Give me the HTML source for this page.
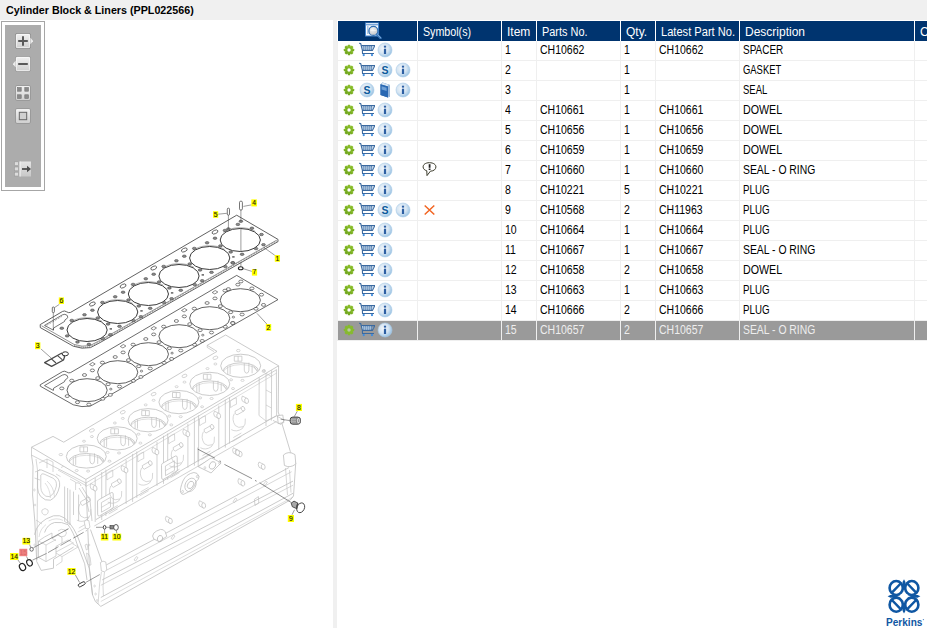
<!DOCTYPE html>
<html><head><meta charset="utf-8"><title>Cylinder Block &amp; Liners</title>
<style>
*{box-sizing:border-box}
html,body{margin:0;padding:0}
body{width:927px;height:628px;overflow:hidden;background:#fff;font-family:"Liberation Sans",sans-serif;position:relative}
#title{position:absolute;left:0;top:0;width:927px;height:20px;background:#f0f0f0;font-weight:bold;font-size:11px;line-height:20px;padding-left:6px;color:#000;white-space:nowrap}
#sep{position:absolute;left:333px;top:20px;width:4px;height:608px;background:#f0f0f0}
#tools{position:absolute;left:1px;top:21px;width:44px;height:170px;border:1px solid #a6a6a6;background:#fff}
#tools .in{position:absolute;left:3px;top:3px;width:36px;height:162px;background:#acacac}
#tools svg{position:absolute;overflow:visible}
#diagram{position:absolute;left:0;top:20px;width:333px;height:608px}
#grid{position:absolute;left:337px;top:20px;width:590px;height:608px;overflow:hidden}
table{border-collapse:separate;border-spacing:0;table-layout:fixed;position:absolute;left:0;top:0;width:700px;font-size:12px;color:#000}
th{background:#00346f;color:#fff;font-weight:normal;text-align:left;height:21px;padding:0 0 0 5px;border-left:1px solid #fff;border-top:1px solid #fff;white-space:nowrap;overflow:hidden;line-height:20px}
td{height:20px;padding:0 0 0 3px;border-left:1px solid #efefef;border-bottom:1px solid #efefef;white-space:nowrap;overflow:hidden;line-height:19px;position:relative}
tr.sel td{background:#9a9a9a;color:#eee;border-left-color:#efefef}
td.c1,td.c2{padding:0}
span.t{display:inline-block;transform-origin:0 50%;transform:scaleX(.875);font-size:12px}
th span{display:inline-block;transform-origin:0 50%;position:relative;top:1px}
#title span{display:inline-block;transform-origin:0 50%;transform:scaleX(.975)}
svg.ic{position:absolute;top:1px;width:16px;height:16px;overflow:visible}
svg.sy{position:absolute;left:4px;top:1px;width:16px;height:16px;overflow:visible}
#logo{position:absolute;left:884px;top:576px;width:43px;height:52px;overflow:visible}
</style></head><body>
<svg width="0" height="0" style="position:absolute">
<defs>
<radialGradient id="gInfo" cx="0.4" cy="0.4" r="0.65">
 <stop offset="0" stop-color="#f4f8fc"/><stop offset="0.55" stop-color="#d4e4f2"/><stop offset="1" stop-color="#94bfe2"/>
</radialGradient>
<linearGradient id="gBtn" x1="0" y1="0" x2="0" y2="1"><stop offset="0" stop-color="#f2f2f2"/><stop offset="1" stop-color="#cfcfcf"/></linearGradient>
<linearGradient id="gGear" x1="0" y1="0" x2="0" y2="1"><stop offset="0" stop-color="#8cc02c"/><stop offset="1" stop-color="#6fa51c"/></linearGradient>
<radialGradient id="gLens" cx="0.4" cy="0.35" r="0.7"><stop offset="0" stop-color="#f2f2f2"/><stop offset="1" stop-color="#bfc3c8"/></radialGradient>
</defs>
<symbol id="gear" viewBox="0 0 16 16">
 <g transform="translate(8,8)" fill="url(#gGear)">
  <circle r="4"/>
  <g id="gt"><rect x="-1.25" y="-5.2" width="2.5" height="10.4" rx="0.5"/><rect x="-5.2" y="-1.25" width="10.4" height="2.5" rx="0.5"/></g>
  <use href="#gt" transform="rotate(45)"/>
  <circle r="1.7" fill="#fff"/>
 </g>
</symbol>
<symbol id="gear2" viewBox="0 0 16 16">
 <g transform="translate(8,8)" fill="#86ba2e">
  <circle r="4"/>
  <g id="gt2"><rect x="-1.25" y="-5.2" width="2.5" height="10.4" rx="0.5"/><rect x="-5.2" y="-1.25" width="10.4" height="2.5" rx="0.5"/></g>
  <use href="#gt2" transform="rotate(45)"/>
  <circle r="1.7" fill="#b9c9a0"/>
 </g>
</symbol>
<symbol id="cart" viewBox="0 0 16 16">
 <path d="M2.4 3.6 L13.2 3.6 L11.3 8.4 L3.6 8.4 Z" fill="#dfe9f4" stroke="none"/>
 <path d="M0 1.3 L1.7 1.5 L3.4 8.4 L3.5 11.5 L15 11.5" fill="none" stroke="#3b6aa0" stroke-width="1.1" stroke-linejoin="round"/>
 <path d="M2.3 3.6 L15.9 3.6 L13.4 8.4 L3.4 8.4" fill="none" stroke="#3b6aa0" stroke-width="1.1"/>
 <path d="M4.8 4 V8 M6.8 4 V8 M8.8 4 V8 M10.8 4 V8 M12.6 4 V8" stroke="#4a78ad" stroke-width="0.9"/>
 <path d="M3 6 H14.5" stroke="#7fa3cb" stroke-width="0.7"/>
 <circle cx="4.7" cy="13.1" r="1.15" fill="#3b8be0"/><circle cx="13" cy="13.1" r="1.15" fill="#3b8be0"/>
</symbol>
<symbol id="info" viewBox="0 0 16 16">
 <circle cx="8" cy="8" r="7" fill="url(#gInfo)" stroke="#a9cbe8" stroke-width="0.6"/>
 <rect x="6.9" y="3.7" width="2.2" height="1.9" fill="#2d5fa3"/><rect x="6.9" y="6.7" width="2.2" height="5.3" fill="#2d5fa3"/>
</symbol>
<symbol id="sicon" viewBox="0 0 16 16">
 <circle cx="8" cy="8" r="7" fill="url(#gInfo)" stroke="#a9cbe8" stroke-width="0.6"/>
 <text x="8" y="11.6" text-anchor="middle" font-family="Liberation Sans, sans-serif" font-weight="bold" font-size="10.5" fill="#0c5a9a">S</text>
</symbol>
<symbol id="book" viewBox="0 0 16 16">
 <path d="M3.5 2.2 L5.5 0.6 L13 3 L13 14 L11 15.6 L3.5 13 Z" fill="#2f6fb8"/>
 <path d="M5.5 0.6 L13 3 L13 14 L11 15.6 L11 4.4 L3.5 2.2Z" fill="#d9e6f3"/>
 <path d="M3.5 2.2 L11 4.6 L11 15.6 L3.5 13 Z" fill="#2a68b2"/>
 <path d="M4.6 4.2 L9.6 5.8 L9.6 9 L4.6 7.4Z" fill="#6fa0d6"/>
 <path d="M12 3.2 L12 14.6" stroke="#2a68b2" stroke-width="0.8"/>
</symbol>
<symbol id="search" viewBox="0 0 17 17">
 <rect x="0.5" y="1" width="13" height="13" fill="#fff" stroke="#4484cc" stroke-width="1"/>
 <rect x="1" y="1.5" width="12" height="0.8" fill="#fff"/><rect x="1" y="2.3" width="12" height="1" fill="#3f7fc8"/>
 <path d="M2 5 h1.6 M2 7 h1.6 M2 9 h1.6 M2 11 h1.6" stroke="#4d86c6" stroke-width="0.9"/>
 <circle cx="8.4" cy="8.9" r="4.5" fill="url(#gLens)" stroke="#2f6fb3" stroke-width="1.2"/>
 <path d="M5.4 8.6 h6" stroke="#fff" stroke-width="0.8" opacity="0.7"/>
 <path d="M11.9 12.4 L15.6 16.1" stroke="#3b78ba" stroke-width="2.2" stroke-linecap="round"/>
 <path d="M12.6 12.6 L15.6 15.6" stroke="#9cc0e6" stroke-width="0.7" stroke-linecap="round"/>
</symbol>
<symbol id="note" viewBox="0 0 16 16">
 <path d="M7.4 0.7 C3.4 0.7 1.1 2.6 1.1 4.9 C1.1 6.8 2.6 8.2 4.8 8.8 L5 13.6 L8.4 9.2 C12 9.1 13.9 7.1 13.9 4.9 C13.9 2.6 11.6 0.7 7.4 0.7Z" fill="#fff" stroke="#3a3a2a" stroke-width="1" stroke-linejoin="round"/>
 <rect x="6.7" y="2.2" width="1.8" height="3.6" fill="#222"/><rect x="6.7" y="6.5" width="1.8" height="1.5" fill="#222"/>
</symbol>
<symbol id="xmark" viewBox="0 0 16 16">
 <path d="M2.7 3.5 L12.3 12.5 M12.3 3.5 L2.7 12.5" stroke="#f26522" stroke-width="1.5" stroke-linecap="butt"/>
</symbol>
<symbol id="tplus" viewBox="0 0 18 16">
 <rect x="0.5" y="0.5" width="15" height="15" rx="1.5" fill="url(#gBtn)" stroke="#8d8d8d" stroke-width="1"/>
 <path d="M15.4 4.8 L18.2 8 L15.4 11.2Z" fill="#ececec"/>
 <rect x="1.3" y="1.3" width="13.4" height="13.4" rx="1" fill="none" stroke="#fff" stroke-width="0.8" opacity="0.8"/>
 <path d="M3.2 8 H12.8 M8 3.2 V12.8" stroke="#5a5a5a" stroke-width="2"/>
</symbol>
<symbol id="tminus" viewBox="0 0 18 16">
 <rect x="2.5" y="0.5" width="15" height="15" rx="1.5" fill="url(#gBtn)" stroke="#9a9a9a" stroke-width="1"/>
 <path d="M2.6 4.8 L-0.2 8 L2.6 11.2Z" fill="#ececec"/>
 <rect x="3.3" y="1.3" width="13.4" height="13.4" rx="1" fill="none" stroke="#fff" stroke-width="0.8" opacity="0.8"/>
 <path d="M5.2 8 H14.8" stroke="#5a5a5a" stroke-width="2"/>
</symbol>
<symbol id="tgrid" viewBox="0 0 16 16">
 <rect x="0.5" y="0.5" width="15" height="15" rx="1.5" fill="url(#gBtn)" stroke="#9a9a9a" stroke-width="1"/>
 <g fill="#8a8a8a" stroke="#6f6f6f" stroke-width="0.6"><rect x="2.6" y="2.6" width="3.6" height="3.6"/><rect x="9.8" y="2.6" width="3.6" height="3.6"/><rect x="2.6" y="9.8" width="3.6" height="3.6"/><rect x="9.8" y="9.8" width="3.6" height="3.6"/></g>
</symbol>
<symbol id="tsq" viewBox="0 0 16 16">
 <rect x="0.5" y="0.5" width="15" height="15" rx="1.5" fill="url(#gBtn)" stroke="#9a9a9a" stroke-width="1"/>
 <rect x="4.3" y="4.3" width="7.4" height="7.4" fill="#d0d0d0" stroke="#666" stroke-width="1"/>
</symbol>
<symbol id="tlist" viewBox="0 0 18 16">
 <rect x="6" y="0.5" width="11" height="15" fill="url(#gBtn)" opacity="0.8"/>
 <path d="M6 0.5 V15.5" stroke="#f2f2f2" stroke-width="1.2"/>
 <g fill="#dcdcdc" stroke="#9a9a9a" stroke-width="0.6"><rect x="0.5" y="0.8" width="4" height="3.8"/><rect x="0.5" y="6" width="4" height="3.8"/><rect x="0.5" y="11.2" width="4" height="3.8"/></g>
 <path d="M8 8 H14" stroke="#4d4d4d" stroke-width="1.8"/><path d="M13 4.8 L17 8 L13 11.2Z" fill="#4d4d4d"/>
</symbol>
<symbol id="perkins" viewBox="0 0 43 52">
 <g fill="none" stroke="#0f57a3" stroke-width="2.6">
  <ellipse cx="12.2" cy="12" rx="6.6" ry="7"/><ellipse cx="27.8" cy="12" rx="6.6" ry="7"/>
  <ellipse cx="12.2" cy="28.7" rx="6.6" ry="7"/><ellipse cx="27.8" cy="28.7" rx="6.6" ry="7"/>
  <path d="M7.4 17.2 L17.2 7 M32.6 17.2 L22.8 7 M7.4 23.5 L17.2 33.7 M32.6 23.5 L22.8 33.7" stroke-width="2.5"/>
 </g>
 <path d="M3.6 20.35 L6.4 18.9 H33.6 L36.4 20.35 L33.6 21.8 H6.4Z M20 3.2 L21.5 6 V34.7 L20 37.5 L18.5 34.7 V6Z" fill="#0f57a3"/>
 <path d="M13.2 20.35 Q18.8 19.2 20 13.4 Q21.2 19.2 26.8 20.35 Q21.2 21.5 20 27.3 Q18.8 21.5 13.2 20.35Z" fill="#fff"/>
 <text x="2" y="49.6" font-family="Liberation Sans, sans-serif" font-weight="bold" font-size="11" fill="#0f57a3" textLength="36.4" lengthAdjust="spacingAndGlyphs">Perkins</text>
 <circle cx="39.4" cy="43.6" r="0.7" fill="#5c8cc4"/>
</symbol>
</svg>

<div id="title"><span>Cylinder Block &amp; Liners (PPL022566)</span></div>
<div id="diagram"><svg width="333" height="608" viewBox="0 20 333 608" style="display:block">
<g id="block">
<path d="M278.6 365.8 L278.2 412 L281.8 423 L290.4 451.7 L295.7 463.5 L293.5 496 L290.3 500 L100.8 606.4 L95.4 601.6 L92.6 595 L89.4 568 L85.9 483" fill="none" stroke="#bebebe" stroke-width="0.8" stroke-linejoin="round" />
<path d="M95.9 519.6 L276 415.9" fill="none" stroke="#bebebe" stroke-width="0.8" stroke-linejoin="round" />
<path d="M94.3 526 L197.9 466.3 L276.6 421.4" fill="none" stroke="#bebebe" stroke-width="0.7" stroke-linejoin="round" />
<path d="M197.9 460.7 V447.4" fill="none" stroke="#bebebe" stroke-width="0.7" stroke-linejoin="round" />
<path d="M106.2 565 L288.9 467.6" fill="none" stroke="#bebebe" stroke-width="0.8" stroke-linejoin="round" />
<path d="M106.2 570.4 L291.6 471.7" fill="none" stroke="#bebebe" stroke-width="0.6" stroke-linejoin="round" />
<path d="M102.2 579.9 L293 481.1" fill="none" stroke="#bebebe" stroke-width="0.8" stroke-linejoin="round" />
<path d="M100.8 585.3 L293 485.2" fill="none" stroke="#bebebe" stroke-width="0.6" stroke-linejoin="round" />
<path d="M100.8 597.5 L293 493.3" fill="none" stroke="#bebebe" stroke-width="0.8" stroke-linejoin="round" />
<path d="M100.8 601.5 L293 497" fill="none" stroke="#bebebe" stroke-width="0.5" stroke-linejoin="round" />
<path d="M283.4 455 Q288.6 450.4 295 454.6 L295.8 464 Q290 468.6 284.4 465.4Z" fill="#fff" stroke="#bebebe" stroke-width="0.8" stroke-linejoin="round" />
<path d="M277.4 415.6 l5.4 -0.6 l1 7.6 l-5.6 1Z" fill="#fff" stroke="#bebebe" stroke-width="0.8" stroke-linejoin="round" />
<path d="M289.5 470 L291 492.6 M285.5 468 L287.5 495" fill="none" stroke="#bebebe" stroke-width="0.6" stroke-linejoin="round" />
<path d="M271.6 370.2 L271.4 420.6 M266 373.4 L266 426 M259.2 377.4 L259 415.5 M276.4 369.6 L276.6 416" fill="none" stroke="#bebebe" stroke-width="0.7" stroke-linejoin="round" />
<path d="M259 415.5 L266 421 L276.6 416 M266 373.4 L271.6 376.6 M266 390 L271.5 393 M266 405 L271.5 408" fill="none" stroke="#bebebe" stroke-width="0.6" stroke-linejoin="round" />
<path d="M276.6 416 L284.4 420.2 L281 424.5 L273 420.4" fill="none" stroke="#bebebe" stroke-width="0.7" stroke-linejoin="round" />
<path d="M225.3 399.6 V447.6 M229.5 397.2 V443.6 M218.8 405.6 V449.6" fill="none" stroke="#bebebe" stroke-width="0.7" stroke-linejoin="round" />
<path d="M230.3 401.1 q3 -2.4 6 -3.4 l0.2 6.5 q-3 1 -6 3.4Z" fill="none" stroke="#bebebe" stroke-width="0.6" stroke-linejoin="round" />
<path d="M194.4 417.7 V465.7 M198.6 415.3 V461.7 M187.9 423.7 V467.7" fill="none" stroke="#bebebe" stroke-width="0.7" stroke-linejoin="round" />
<path d="M199.4 419.2 q3 -2.4 6 -3.4 l0.2 6.5 q-3 1 -6 3.4Z" fill="none" stroke="#bebebe" stroke-width="0.6" stroke-linejoin="round" />
<path d="M163.5 435.8 V483.8 M167.7 433.4 V479.8 M157.0 441.8 V485.8" fill="none" stroke="#bebebe" stroke-width="0.7" stroke-linejoin="round" />
<path d="M168.5 437.3 q3 -2.4 6 -3.4 l0.2 6.5 q-3 1 -6 3.4Z" fill="none" stroke="#bebebe" stroke-width="0.6" stroke-linejoin="round" />
<path d="M132.6 453.9 V501.9 M136.8 451.5 V497.9 M126.1 459.9 V503.9" fill="none" stroke="#bebebe" stroke-width="0.7" stroke-linejoin="round" />
<path d="M137.6 455.4 q3 -2.4 6 -3.4 l0.2 6.5 q-3 1 -6 3.4Z" fill="none" stroke="#bebebe" stroke-width="0.6" stroke-linejoin="round" />
<path d="M101.7 472.0 V520.0 M105.9 469.6 V516.0 M95.2 478.0 V522.0" fill="none" stroke="#bebebe" stroke-width="0.7" stroke-linejoin="round" />
<path d="M106.7 473.5 q3 -2.4 6 -3.4 l0.2 6.5 q-3 1 -6 3.4Z" fill="none" stroke="#bebebe" stroke-width="0.6" stroke-linejoin="round" />
<path d="M162.4 463.4 l13 -7.4 q1.6 -0.4 1.8 1.2 l0.2 12.8 q0 1.3 -1.3 2.1 l-12.6 7.2 q-1.6 0.5 -1.8 -1.2 l-0.2 -12.6 q0 -1.4 0.9 -2.1Z" fill="#fff" stroke="#bebebe" stroke-width="0.8" stroke-linejoin="round" />
<path d="M165.4 466.0 l9 -5.2 l0.1 9.6 l-9 5.2Z" fill="none" stroke="#bebebe" stroke-width="0.7" stroke-linejoin="round" />
<path d="M165.4 470.8 l9 -5.2" fill="none" stroke="#bebebe" stroke-width="0.6" stroke-linejoin="round" />
<path d="M98.4 500.0 l13 -7.4 q1.6 -0.4 1.8 1.2 l0.2 12.8 q0 1.3 -1.3 2.1 l-12.6 7.2 q-1.6 0.5 -1.8 -1.2 l-0.2 -12.6 q0 -1.4 0.9 -2.1Z" fill="#fff" stroke="#bebebe" stroke-width="0.8" stroke-linejoin="round" />
<path d="M101.4 502.6 l9 -5.2 l0.1 9.6 l-9 5.2Z" fill="none" stroke="#bebebe" stroke-width="0.7" stroke-linejoin="round" />
<path d="M101.4 507.4 l9 -5.2" fill="none" stroke="#bebebe" stroke-width="0.6" stroke-linejoin="round" />
<path d="M244.0 410.9 l-7 4 q-2.4 -0.6 -2 -3.6 l7 -4" fill="none" stroke="#bebebe" stroke-width="0.7" stroke-linejoin="round" />
<ellipse cx="243.0" cy="408.7" rx="1.7" ry="2.4" fill="#fff" stroke="#bebebe" stroke-width="0.7" transform="rotate(-25 243.0 408.7)"/>
<path d="M231.3 429.6 q5 3 11 -1 q4 -4 3 -10" fill="none" stroke="#bebebe" stroke-width="0.6" stroke-linejoin="round" />
<path d="M234.3 413.6 q-3 6 1 12 q3 3 8 1" fill="none" stroke="#bebebe" stroke-width="0.6" stroke-linejoin="round" />
<path d="M233.3 437.6 l8 -4.6 M232.3 441.6 l9 -5.2" fill="none" stroke="#bebebe" stroke-width="0.6" stroke-linejoin="round" />
<path d="M213.1 429.0 l-7 4 q-2.4 -0.6 -2 -3.6 l7 -4" fill="none" stroke="#bebebe" stroke-width="0.7" stroke-linejoin="round" />
<ellipse cx="212.1" cy="426.8" rx="1.7" ry="2.4" fill="#fff" stroke="#bebebe" stroke-width="0.7" transform="rotate(-25 212.1 426.8)"/>
<path d="M200.4 447.7 q5 3 11 -1 q4 -4 3 -10" fill="none" stroke="#bebebe" stroke-width="0.6" stroke-linejoin="round" />
<path d="M203.4 431.7 q-3 6 1 12 q3 3 8 1" fill="none" stroke="#bebebe" stroke-width="0.6" stroke-linejoin="round" />
<path d="M202.4 455.7 l8 -4.6 M201.4 459.7 l9 -5.2" fill="none" stroke="#bebebe" stroke-width="0.6" stroke-linejoin="round" />
<path d="M182.2 447.1 l-7 4 q-2.4 -0.6 -2 -3.6 l7 -4" fill="none" stroke="#bebebe" stroke-width="0.7" stroke-linejoin="round" />
<ellipse cx="181.2" cy="444.9" rx="1.7" ry="2.4" fill="#fff" stroke="#bebebe" stroke-width="0.7" transform="rotate(-25 181.2 444.9)"/>
<path d="M169.5 465.8 q5 3 11 -1 q4 -4 3 -10" fill="none" stroke="#bebebe" stroke-width="0.6" stroke-linejoin="round" />
<path d="M172.5 449.8 q-3 6 1 12 q3 3 8 1" fill="none" stroke="#bebebe" stroke-width="0.6" stroke-linejoin="round" />
<path d="M171.5 473.8 l8 -4.6 M170.5 477.8 l9 -5.2" fill="none" stroke="#bebebe" stroke-width="0.6" stroke-linejoin="round" />
<path d="M151.3 465.2 l-7 4 q-2.4 -0.6 -2 -3.6 l7 -4" fill="none" stroke="#bebebe" stroke-width="0.7" stroke-linejoin="round" />
<ellipse cx="150.3" cy="463.0" rx="1.7" ry="2.4" fill="#fff" stroke="#bebebe" stroke-width="0.7" transform="rotate(-25 150.3 463.0)"/>
<path d="M138.6 483.9 q5 3 11 -1 q4 -4 3 -10" fill="none" stroke="#bebebe" stroke-width="0.6" stroke-linejoin="round" />
<path d="M141.6 467.9 q-3 6 1 12 q3 3 8 1" fill="none" stroke="#bebebe" stroke-width="0.6" stroke-linejoin="round" />
<path d="M140.6 491.9 l8 -4.6 M139.6 495.9 l9 -5.2" fill="none" stroke="#bebebe" stroke-width="0.6" stroke-linejoin="round" />
<path d="M120.4 483.3 l-7 4 q-2.4 -0.6 -2 -3.6 l7 -4" fill="none" stroke="#bebebe" stroke-width="0.7" stroke-linejoin="round" />
<ellipse cx="119.4" cy="481.1" rx="1.7" ry="2.4" fill="#fff" stroke="#bebebe" stroke-width="0.7" transform="rotate(-25 119.4 481.1)"/>
<path d="M107.7 502.0 q5 3 11 -1 q4 -4 3 -10" fill="none" stroke="#bebebe" stroke-width="0.6" stroke-linejoin="round" />
<path d="M110.7 486.0 q-3 6 1 12 q3 3 8 1" fill="none" stroke="#bebebe" stroke-width="0.6" stroke-linejoin="round" />
<path d="M109.7 510.0 l8 -4.6 M108.7 514.0 l9 -5.2" fill="none" stroke="#bebebe" stroke-width="0.6" stroke-linejoin="round" />
<path d="M89.5 501.4 l-7 4 q-2.4 -0.6 -2 -3.6 l7 -4" fill="none" stroke="#bebebe" stroke-width="0.7" stroke-linejoin="round" />
<ellipse cx="88.5" cy="499.2" rx="1.7" ry="2.4" fill="#fff" stroke="#bebebe" stroke-width="0.7" transform="rotate(-25 88.5 499.2)"/>
<path d="M76.8 520.1 q5 3 11 -1 q4 -4 3 -10" fill="none" stroke="#bebebe" stroke-width="0.6" stroke-linejoin="round" />
<path d="M79.8 504.1 q-3 6 1 12 q3 3 8 1" fill="none" stroke="#bebebe" stroke-width="0.6" stroke-linejoin="round" />
<path d="M78.8 528.1 l8 -4.6 M77.8 532.1 l9 -5.2" fill="none" stroke="#bebebe" stroke-width="0.6" stroke-linejoin="round" />
<path d="M198.2 466.7 L210.1 458.6 Q211.6 457.8 213 458.6 L221.1 462.9 L211.1 473 Z" fill="#fff" stroke="#bebebe" stroke-width="0.8" stroke-linejoin="round" />
<path d="M198.2 466.7 V460.2" fill="none" stroke="#bebebe" stroke-width="0.7" stroke-linejoin="round" />
<ellipse cx="212.5" cy="465.4" rx="2.9" ry="3.9" fill="none" stroke="#bebebe" stroke-width="0.8" transform="rotate(25 212.5 465.4)"/>
<ellipse cx="204.9" cy="467.8" rx="0.9" ry="1.2" fill="none" stroke="#bebebe" stroke-width="0.6"/>
<ellipse cx="219.6" cy="463.2" rx="0.9" ry="1.2" fill="none" stroke="#bebebe" stroke-width="0.6"/>
<path d="M180.5 492 Q179.8 489 182.9 481 Q186 474 193.9 472.5 Q197.4 472.4 199.1 476.3 Q199.4 479 195.8 482 Q194.4 490 183.4 494.4 Q181.4 494.6 180.5 492Z" fill="#fff" stroke="#bebebe" stroke-width="0.8" stroke-linejoin="round" />
<ellipse cx="190.5" cy="484.9" rx="5.2" ry="7.1" fill="none" stroke="#bebebe" stroke-width="0.7" transform="rotate(28 190.5 484.9)"/>
<ellipse cx="190.5" cy="484.9" rx="2.7" ry="3.9" fill="none" stroke="#bebebe" stroke-width="0.8" transform="rotate(28 190.5 484.9)"/>
<ellipse cx="182.6" cy="491.6" rx="0.9" ry="1.2" fill="none" stroke="#bebebe" stroke-width="0.6"/>
<ellipse cx="197.2" cy="476.6" rx="0.9" ry="1.2" fill="none" stroke="#bebebe" stroke-width="0.6"/>
<path d="M152.6 536 q0.4 -3.4 4 -5 l4 -1.6 q3 -0.4 4.6 2.4 l1.6 4.6 l-7.6 5.2 l-5.4 -2.6Z" fill="#fff" stroke="#bebebe" stroke-width="0.8" stroke-linejoin="round" />
<ellipse cx="160.0" cy="538.6" rx="2.6" ry="3.2" fill="none" stroke="#bebebe" stroke-width="0.8" transform="rotate(20 160.0 538.6)"/>
<path d="M240.2 451.4 l-4.2 -2.2 q-1.6 2.4 0 5.2 l4.2 2.2" fill="none" stroke="#bebebe" stroke-width="0.7" stroke-linejoin="round" />
<ellipse cx="240.2" cy="454.0" rx="1.9" ry="2.7" fill="#fff" stroke="#bebebe" stroke-width="0.7" transform="rotate(-10 240.2 454.0)"/>
<path d="M263.2 464.2 l-4.2 -2.2 q-1.6 2.4 0 5.2 l4.2 2.2" fill="none" stroke="#bebebe" stroke-width="0.7" stroke-linejoin="round" />
<ellipse cx="263.2" cy="466.8" rx="1.9" ry="2.7" fill="#fff" stroke="#bebebe" stroke-width="0.7" transform="rotate(-10 263.2 466.8)"/>
<path d="M242.9 480.7 l-4.2 -2.2 q-1.6 2.4 0 5.2 l4.2 2.2" fill="none" stroke="#bebebe" stroke-width="0.7" stroke-linejoin="round" />
<ellipse cx="242.9" cy="483.3" rx="1.9" ry="2.7" fill="#fff" stroke="#bebebe" stroke-width="0.7" transform="rotate(-10 242.9 483.3)"/>
<path d="M203.7 502.9 l-4.2 -2.2 q-1.6 2.4 0 5.2 l4.2 2.2" fill="none" stroke="#bebebe" stroke-width="0.7" stroke-linejoin="round" />
<ellipse cx="203.7" cy="505.5" rx="1.9" ry="2.7" fill="#fff" stroke="#bebebe" stroke-width="0.7" transform="rotate(-10 203.7 505.5)"/>
<path d="M170.4 518.3 l-4.2 -2.2 q-1.6 2.4 0 5.2 l4.2 2.2" fill="none" stroke="#bebebe" stroke-width="0.7" stroke-linejoin="round" />
<ellipse cx="170.4" cy="520.9" rx="1.9" ry="2.7" fill="#fff" stroke="#bebebe" stroke-width="0.7" transform="rotate(-10 170.4 520.9)"/>
<path d="M237.6 450.0 l-4.2 -2.2 q-1.6 2.4 0 5.2 l4.2 2.2" fill="none" stroke="#bebebe" stroke-width="0.7" stroke-linejoin="round" />
<ellipse cx="237.6" cy="452.6" rx="1.9" ry="2.7" fill="#fff" stroke="#bebebe" stroke-width="0.7" transform="rotate(-10 237.6 452.6)"/>
<path d="M246.6 398.2 l-4.2 -2.2 q-1.6 2.4 0 5.2 l4.2 2.2" fill="none" stroke="#bebebe" stroke-width="0.7" stroke-linejoin="round" />
<ellipse cx="246.6" cy="400.8" rx="1.9" ry="2.7" fill="#fff" stroke="#bebebe" stroke-width="0.7" transform="rotate(-10 246.6 400.8)"/>
<path d="M218.7 413.3 l-4.2 -2.2 q-1.6 2.4 0 5.2 l4.2 2.2" fill="none" stroke="#bebebe" stroke-width="0.7" stroke-linejoin="round" />
<ellipse cx="218.7" cy="415.9" rx="1.9" ry="2.7" fill="#fff" stroke="#bebebe" stroke-width="0.7" transform="rotate(-10 218.7 415.9)"/>
<path d="M187.8 431.4 l-4.2 -2.2 q-1.6 2.4 0 5.2 l4.2 2.2" fill="none" stroke="#bebebe" stroke-width="0.7" stroke-linejoin="round" />
<ellipse cx="187.8" cy="434.0" rx="1.9" ry="2.7" fill="#fff" stroke="#bebebe" stroke-width="0.7" transform="rotate(-10 187.8 434.0)"/>
<path d="M156.9 449.5 l-4.2 -2.2 q-1.6 2.4 0 5.2 l4.2 2.2" fill="none" stroke="#bebebe" stroke-width="0.7" stroke-linejoin="round" />
<ellipse cx="156.9" cy="452.1" rx="1.9" ry="2.7" fill="#fff" stroke="#bebebe" stroke-width="0.7" transform="rotate(-10 156.9 452.1)"/>
<path d="M126.0 467.6 l-4.2 -2.2 q-1.6 2.4 0 5.2 l4.2 2.2" fill="none" stroke="#bebebe" stroke-width="0.7" stroke-linejoin="round" />
<ellipse cx="126.0" cy="470.2" rx="1.9" ry="2.7" fill="#fff" stroke="#bebebe" stroke-width="0.7" transform="rotate(-10 126.0 470.2)"/>
<path d="M95.1 485.7 l-4.2 -2.2 q-1.6 2.4 0 5.2 l4.2 2.2" fill="none" stroke="#bebebe" stroke-width="0.7" stroke-linejoin="round" />
<ellipse cx="95.1" cy="488.3" rx="1.9" ry="2.7" fill="#fff" stroke="#bebebe" stroke-width="0.7" transform="rotate(-10 95.1 488.3)"/>
<path d="M134.0 560.0 l2.4 -3.4 l1.6 1 l-2.4 3.4Z" fill="none" stroke="#bebebe" stroke-width="0.6" stroke-linejoin="round" />
<path d="M171.0 538.4 l2.4 -3.4 l1.6 1 l-2.4 3.4Z" fill="none" stroke="#bebebe" stroke-width="0.6" stroke-linejoin="round" />
<path d="M263.4 484.6 l2.4 -3.4 l1.6 1 l-2.4 3.4Z" fill="none" stroke="#bebebe" stroke-width="0.6" stroke-linejoin="round" />
<path d="M233.0 501.6 l2.4 -3.4 l1.6 1 l-2.4 3.4Z" fill="none" stroke="#bebebe" stroke-width="0.6" stroke-linejoin="round" />
<path d="M254.4 499.4 l4 -2.8 l0.4 6.4 l-3.8 2.4Z" fill="none" stroke="#bebebe" stroke-width="0.7" stroke-linejoin="round" />
<path d="M31.5 455.1 L33 466 L32.6 495 L34.8 521 L36.7 561.5 L41.2 570.4 L53.5 568.2 L53.5 559.3 L73.6 547" fill="none" stroke="#bebebe" stroke-width="0.8" stroke-linejoin="round" />
<path d="M36 459 L37.5 470 L37 560" fill="none" stroke="#bebebe" stroke-width="0.6" stroke-linejoin="round" />
<path d="M37.6 471.4 Q38.6 469 41.6 470 L54.4 475.6 Q60.4 478.8 59.6 486 Q57.4 497 50.4 500.2 Q45 501.2 40.6 496.4 Q37.6 492.4 37.6 488Z" fill="none" stroke="#bebebe" stroke-width="0.8" stroke-linejoin="round" />
<path d="M40.8 475 Q41.6 473.2 44 474 L53 478.2 Q57 480.6 56.4 486 Q54.6 494 49.6 496.6 Q45.6 497.4 42.8 493.6 Q40.8 490.6 40.8 487.4Z" fill="none" stroke="#bebebe" stroke-width="0.7" stroke-linejoin="round" />
<path d="M47 481 Q54 487 54.5 497 M45 483 Q50 489 50.4 498" fill="none" stroke="#bebebe" stroke-width="0.5" stroke-linejoin="round" />
<path d="M35 472 L40 470 M34.5 478 L40 480 M39 463 L47 459 L53 462 M53 462 L53 472 M47 459 V468 M42 510 q3 -3 6 0 q1 4 -3 5 q-4 -1 -3 -5Z M36 520 L42 524" fill="none" stroke="#bebebe" stroke-width="0.6" stroke-linejoin="round" />
<path d="M64.6 486.5 V521.5 L70 524.5 V489.6 M67.6 488 V523 M73.5 491.6 V515 M78.6 494.6 V521" fill="none" stroke="#bebebe" stroke-width="0.7" stroke-linejoin="round" />
<path d="M58 470 L86 485.6 M56 474 L60.5 476.6 M70 479 L75.6 482.2 L75.6 490 M61 467.6 L64 466 L68 468.2" fill="none" stroke="#bebebe" stroke-width="0.6" stroke-linejoin="round" />
<path d="M79 488 L86 499 L89 512 M82 487 L90 500 L92 521 M76 483 q4 -1 5 3" fill="none" stroke="#bebebe" stroke-width="0.7" stroke-linejoin="round" />
<path d="M34.5 534.7 Q37 521 53.5 515.8 Q60 514.6 64.6 518 Q75 527 80.3 543.7 L89.2 568.2 L92.5 595" fill="none" stroke="#bebebe" stroke-width="0.8" stroke-linejoin="round" />
<path d="M44.6 532.5 Q47 524.5 54.6 522.5 Q62 521.6 68 524.7 Q73.6 532 76.9 543.7 L84.7 563.8 L87 580" fill="none" stroke="#bebebe" stroke-width="0.8" stroke-linejoin="round" />
<path d="M39 537 Q40 529 46 524.6 M48.6 521 Q56 517 63 520.4" fill="none" stroke="#bebebe" stroke-width="0.5" stroke-linejoin="round" />
<path d="M44.5 537 L52 533 L52 538.4 L58 535 L62 537.4 L62 543 L56 546.4 L56 556 L46 561.6 L38.5 557.4 L38.5 541Z" fill="none" stroke="#bebebe" stroke-width="0.7" stroke-linejoin="round" />
<path d="M46 561.6 V545 L56 539.6 M38.5 541 L46 545 M52 538.4 L56 540.6 M62 543 L68 540 L74 543.4 M56 552 L72 543.4 L78 547 L62 556.6 L56 553 M62 556.6 V561.6 L56 565.6" fill="none" stroke="#bebebe" stroke-width="0.6" stroke-linejoin="round" />
<path d="M58 531 q3 -3 7 -1 q3 3 0 6 q-4 2 -7 -1 M68.6 528.6 L64 531" fill="none" stroke="#bebebe" stroke-width="0.6" stroke-linejoin="round" />
<path d="M84.2 521.6 q2 -2.6 4.6 -1 l1.2 6.6 q-1.6 2.6 -4.4 1.2Z" fill="#fff" stroke="#bebebe" stroke-width="0.7" stroke-linejoin="round" />
<path d="M90.5 529.6 L102.6 563.7" fill="none" stroke="#bebebe" stroke-width="0.8" stroke-linejoin="round" />
<path d="M100.4 562.6 q2.4 -2.6 5.4 -0.6 l1 8 q-2 3 -5.4 1Z" fill="#fff" stroke="#bebebe" stroke-width="0.7" stroke-linejoin="round" />
<path d="M101.4 572 L99.6 584 L98 604 M104.5 572 L103 586 L103.4 596" fill="none" stroke="#bebebe" stroke-width="0.6" stroke-linejoin="round" />
<path d="M86.6 553 q3 1 3.6 5 l0.8 7 q-2 1 -3.4 -1.6Z M85 545 l2 -1 l1 5 l-1.6 1Z" fill="none" stroke="#bebebe" stroke-width="0.6" stroke-linejoin="round" />
<ellipse cx="94.6" cy="586.0" rx="0.8" ry="1.0" fill="none" stroke="#bebebe" stroke-width="0.5"/>
<ellipse cx="95.6" cy="594.0" rx="0.8" ry="1.0" fill="none" stroke="#bebebe" stroke-width="0.5"/>
<ellipse cx="97.0" cy="600.5" rx="0.8" ry="1.0" fill="none" stroke="#bebebe" stroke-width="0.5"/>
<ellipse cx="89.0" cy="545.0" rx="0.8" ry="1.0" fill="none" stroke="#bebebe" stroke-width="0.5"/>
<ellipse cx="34.6" cy="545.0" rx="0.8" ry="1.0" fill="none" stroke="#bebebe" stroke-width="0.5"/>
<ellipse cx="34.4" cy="490.0" rx="0.8" ry="1.0" fill="none" stroke="#bebebe" stroke-width="0.5"/>
<ellipse cx="35.0" cy="505.0" rx="0.8" ry="1.0" fill="none" stroke="#bebebe" stroke-width="0.5"/>
<path d="M225.6 335 L207.2 345.3 L217 351.4 L63.7 442.2 L53 436.4 L31.5 447.2 L85.9 479.4 L278.6 365.8Z" fill="#fff" stroke="#bebebe" stroke-width="0.8" stroke-linejoin="round" />
<path d="M31.5 447.2 V455.1 L85.9 483 L276.7 369.6 M85.9 479.4 V483 M207.2 345.3 V347.4 L214 351.6" fill="none" stroke="#bebebe" stroke-width="0.7" stroke-linejoin="round" />
<path d="M85.9 483 L85.9 486.5 L276.7 373" fill="none" stroke="#bebebe" stroke-width="0.5" stroke-linejoin="round" />
<ellipse cx="240.7" cy="365.8" rx="20.0" ry="11.6" fill="#fff" stroke="#bebebe" stroke-width="0.8"/>
<clipPath id="bc0"><ellipse cx="240.7" cy="365.8" rx="19.6" ry="11.2"/></clipPath>
<g clip-path="url(#bc0)">
<path d="M223.1 371.4 A17.8 8.6 0 0 1 258.7 371.4" fill="none" stroke="#bebebe" stroke-width="0.8" stroke-linejoin="round" />
<path d="M223.1 373.2 A17.8 8.6 0 0 1 258.7 373.2" fill="none" stroke="#bebebe" stroke-width="0.5" stroke-linejoin="round" />
<path d="M227.7 366.4 v9 M230.1 365.2 v9 M244.3 363.2 v7 q0.4 3 2.4 3 q2 -0.2 2.2 -3 v-7.6 M252.1 365.2 v8 M253.7 366.2 l4 6" fill="none" stroke="#bebebe" stroke-width="0.7" stroke-linejoin="round" />
</g>
<path d="M234.3 356.2 h7.6 v5 h-7.6Z M238.1 356.2 v5" fill="#fff" stroke="#bebebe" stroke-width="0.7" stroke-linejoin="round" />
<ellipse cx="215.4" cy="357.8" rx="2.6" ry="1.5" fill="none" stroke="#bebebe" stroke-width="0.6" transform="rotate(-20 215.4 357.8)"/>
<ellipse cx="215.4" cy="364.0" rx="1.5" ry="1.0" fill="none" stroke="#bebebe" stroke-width="0.6"/>
<ellipse cx="242.5" cy="380.4" rx="1.6" ry="1.0" fill="none" stroke="#bebebe" stroke-width="0.6"/>
<ellipse cx="207.5" cy="368.6" rx="1.5" ry="1.0" fill="none" stroke="#bebebe" stroke-width="0.6"/>
<ellipse cx="263.9" cy="370.5" rx="1.5" ry="1.0" fill="none" stroke="#bebebe" stroke-width="0.6"/>
<ellipse cx="231.1" cy="379.8" rx="1.5" ry="1.0" fill="none" stroke="#bebebe" stroke-width="0.6"/>
<ellipse cx="209.8" cy="383.9" rx="20.0" ry="11.6" fill="#fff" stroke="#bebebe" stroke-width="0.8"/>
<clipPath id="bc1"><ellipse cx="209.8" cy="383.9" rx="19.6" ry="11.2"/></clipPath>
<g clip-path="url(#bc1)">
<path d="M192.2 389.5 A17.8 8.6 0 0 1 227.8 389.5" fill="none" stroke="#bebebe" stroke-width="0.8" stroke-linejoin="round" />
<path d="M192.2 391.3 A17.8 8.6 0 0 1 227.8 391.3" fill="none" stroke="#bebebe" stroke-width="0.5" stroke-linejoin="round" />
<path d="M196.8 384.5 v9 M199.2 383.3 v9 M213.4 381.3 v7 q0.4 3 2.4 3 q2 -0.2 2.2 -3 v-7.6 M221.2 383.3 v8 M222.8 384.3 l4 6" fill="none" stroke="#bebebe" stroke-width="0.7" stroke-linejoin="round" />
</g>
<path d="M203.4 374.3 h7.6 v5 h-7.6Z M207.2 374.3 v5" fill="#fff" stroke="#bebebe" stroke-width="0.7" stroke-linejoin="round" />
<ellipse cx="184.5" cy="375.9" rx="2.6" ry="1.5" fill="none" stroke="#bebebe" stroke-width="0.6" transform="rotate(-20 184.5 375.9)"/>
<ellipse cx="184.5" cy="382.1" rx="1.5" ry="1.0" fill="none" stroke="#bebebe" stroke-width="0.6"/>
<ellipse cx="211.6" cy="398.5" rx="1.6" ry="1.0" fill="none" stroke="#bebebe" stroke-width="0.6"/>
<ellipse cx="176.6" cy="386.7" rx="1.5" ry="1.0" fill="none" stroke="#bebebe" stroke-width="0.6"/>
<ellipse cx="233.0" cy="388.6" rx="1.5" ry="1.0" fill="none" stroke="#bebebe" stroke-width="0.6"/>
<ellipse cx="200.2" cy="397.9" rx="1.5" ry="1.0" fill="none" stroke="#bebebe" stroke-width="0.6"/>
<ellipse cx="178.9" cy="402.1" rx="20.0" ry="11.6" fill="#fff" stroke="#bebebe" stroke-width="0.8"/>
<clipPath id="bc2"><ellipse cx="178.9" cy="402.1" rx="19.6" ry="11.2"/></clipPath>
<g clip-path="url(#bc2)">
<path d="M161.3 407.7 A17.8 8.6 0 0 1 196.9 407.7" fill="none" stroke="#bebebe" stroke-width="0.8" stroke-linejoin="round" />
<path d="M161.3 409.5 A17.8 8.6 0 0 1 196.9 409.5" fill="none" stroke="#bebebe" stroke-width="0.5" stroke-linejoin="round" />
<path d="M165.9 402.7 v9 M168.3 401.5 v9 M182.5 399.5 v7 q0.4 3 2.4 3 q2 -0.2 2.2 -3 v-7.6 M190.3 401.5 v8 M191.9 402.5 l4 6" fill="none" stroke="#bebebe" stroke-width="0.7" stroke-linejoin="round" />
</g>
<path d="M172.5 392.5 h7.6 v5 h-7.6Z M176.3 392.5 v5" fill="#fff" stroke="#bebebe" stroke-width="0.7" stroke-linejoin="round" />
<ellipse cx="153.6" cy="394.1" rx="2.6" ry="1.5" fill="none" stroke="#bebebe" stroke-width="0.6" transform="rotate(-20 153.6 394.1)"/>
<ellipse cx="153.6" cy="400.3" rx="1.5" ry="1.0" fill="none" stroke="#bebebe" stroke-width="0.6"/>
<ellipse cx="180.7" cy="416.7" rx="1.6" ry="1.0" fill="none" stroke="#bebebe" stroke-width="0.6"/>
<ellipse cx="145.7" cy="404.9" rx="1.5" ry="1.0" fill="none" stroke="#bebebe" stroke-width="0.6"/>
<ellipse cx="202.1" cy="406.8" rx="1.5" ry="1.0" fill="none" stroke="#bebebe" stroke-width="0.6"/>
<ellipse cx="169.3" cy="416.1" rx="1.5" ry="1.0" fill="none" stroke="#bebebe" stroke-width="0.6"/>
<ellipse cx="148.1" cy="420.2" rx="20.0" ry="11.6" fill="#fff" stroke="#bebebe" stroke-width="0.8"/>
<clipPath id="bc3"><ellipse cx="148.1" cy="420.2" rx="19.6" ry="11.2"/></clipPath>
<g clip-path="url(#bc3)">
<path d="M130.5 425.8 A17.8 8.6 0 0 1 166.1 425.8" fill="none" stroke="#bebebe" stroke-width="0.8" stroke-linejoin="round" />
<path d="M130.5 427.6 A17.8 8.6 0 0 1 166.1 427.6" fill="none" stroke="#bebebe" stroke-width="0.5" stroke-linejoin="round" />
<path d="M135.1 420.8 v9 M137.5 419.6 v9 M151.7 417.6 v7 q0.4 3 2.4 3 q2 -0.2 2.2 -3 v-7.6 M159.5 419.6 v8 M161.1 420.6 l4 6" fill="none" stroke="#bebebe" stroke-width="0.7" stroke-linejoin="round" />
</g>
<path d="M141.7 410.6 h7.6 v5 h-7.6Z M145.5 410.6 v5" fill="#fff" stroke="#bebebe" stroke-width="0.7" stroke-linejoin="round" />
<ellipse cx="122.8" cy="412.2" rx="2.6" ry="1.5" fill="none" stroke="#bebebe" stroke-width="0.6" transform="rotate(-20 122.8 412.2)"/>
<ellipse cx="122.8" cy="418.4" rx="1.5" ry="1.0" fill="none" stroke="#bebebe" stroke-width="0.6"/>
<ellipse cx="149.9" cy="434.8" rx="1.6" ry="1.0" fill="none" stroke="#bebebe" stroke-width="0.6"/>
<ellipse cx="114.9" cy="423.0" rx="1.5" ry="1.0" fill="none" stroke="#bebebe" stroke-width="0.6"/>
<ellipse cx="171.3" cy="424.9" rx="1.5" ry="1.0" fill="none" stroke="#bebebe" stroke-width="0.6"/>
<ellipse cx="138.5" cy="434.2" rx="1.5" ry="1.0" fill="none" stroke="#bebebe" stroke-width="0.6"/>
<ellipse cx="117.2" cy="438.4" rx="20.0" ry="11.6" fill="#fff" stroke="#bebebe" stroke-width="0.8"/>
<clipPath id="bc4"><ellipse cx="117.2" cy="438.4" rx="19.6" ry="11.2"/></clipPath>
<g clip-path="url(#bc4)">
<path d="M99.6 444.0 A17.8 8.6 0 0 1 135.2 444.0" fill="none" stroke="#bebebe" stroke-width="0.8" stroke-linejoin="round" />
<path d="M99.6 445.8 A17.8 8.6 0 0 1 135.2 445.8" fill="none" stroke="#bebebe" stroke-width="0.5" stroke-linejoin="round" />
<path d="M104.2 439.0 v9 M106.6 437.8 v9 M120.8 435.8 v7 q0.4 3 2.4 3 q2 -0.2 2.2 -3 v-7.6 M128.6 437.8 v8 M130.2 438.8 l4 6" fill="none" stroke="#bebebe" stroke-width="0.7" stroke-linejoin="round" />
</g>
<path d="M110.8 428.8 h7.6 v5 h-7.6Z M114.6 428.8 v5" fill="#fff" stroke="#bebebe" stroke-width="0.7" stroke-linejoin="round" />
<ellipse cx="91.9" cy="430.4" rx="2.6" ry="1.5" fill="none" stroke="#bebebe" stroke-width="0.6" transform="rotate(-20 91.9 430.4)"/>
<ellipse cx="91.9" cy="436.6" rx="1.5" ry="1.0" fill="none" stroke="#bebebe" stroke-width="0.6"/>
<ellipse cx="119.0" cy="453.0" rx="1.6" ry="1.0" fill="none" stroke="#bebebe" stroke-width="0.6"/>
<ellipse cx="84.0" cy="441.2" rx="1.5" ry="1.0" fill="none" stroke="#bebebe" stroke-width="0.6"/>
<ellipse cx="140.4" cy="443.1" rx="1.5" ry="1.0" fill="none" stroke="#bebebe" stroke-width="0.6"/>
<ellipse cx="107.6" cy="452.4" rx="1.5" ry="1.0" fill="none" stroke="#bebebe" stroke-width="0.6"/>
<ellipse cx="86.3" cy="456.5" rx="20.0" ry="11.6" fill="#fff" stroke="#bebebe" stroke-width="0.8"/>
<clipPath id="bc5"><ellipse cx="86.3" cy="456.5" rx="19.6" ry="11.2"/></clipPath>
<g clip-path="url(#bc5)">
<path d="M68.7 462.1 A17.8 8.6 0 0 1 104.3 462.1" fill="none" stroke="#bebebe" stroke-width="0.8" stroke-linejoin="round" />
<path d="M68.7 463.9 A17.8 8.6 0 0 1 104.3 463.9" fill="none" stroke="#bebebe" stroke-width="0.5" stroke-linejoin="round" />
<path d="M73.3 457.1 v9 M75.7 455.9 v9 M89.9 453.9 v7 q0.4 3 2.4 3 q2 -0.2 2.2 -3 v-7.6 M97.7 455.9 v8 M99.3 456.9 l4 6" fill="none" stroke="#bebebe" stroke-width="0.7" stroke-linejoin="round" />
</g>
<path d="M79.9 446.9 h7.6 v5 h-7.6Z M83.7 446.9 v5" fill="#fff" stroke="#bebebe" stroke-width="0.7" stroke-linejoin="round" />
<ellipse cx="88.1" cy="471.1" rx="1.6" ry="1.0" fill="none" stroke="#bebebe" stroke-width="0.6"/>
<ellipse cx="109.5" cy="461.2" rx="1.5" ry="1.0" fill="none" stroke="#bebebe" stroke-width="0.6"/>
<ellipse cx="76.7" cy="470.5" rx="1.5" ry="1.0" fill="none" stroke="#bebebe" stroke-width="0.6"/>
<ellipse cx="238.3" cy="350.6" rx="1.8" ry="1.2" fill="none" stroke="#bebebe" stroke-width="0.6"/>
<ellipse cx="263.8" cy="371.4" rx="1.6" ry="1.1" fill="none" stroke="#bebebe" stroke-width="0.6"/>
<ellipse cx="60.9" cy="454.6" rx="1.8" ry="1.1" fill="none" stroke="#bebebe" stroke-width="0.6"/>
</g>
<g transform="translate(0 60.2)"><path d="M70.6 312.4 L236.7 215.2 L278 239.4 L100 340.6 L90.5 345.8 Q82 347.6 73.3 344.6 L40.3 326 L40.2 324.6 L62.6 311.4 Q64.5 310.4 66.6 311.8 Q68.6 313.2 70.6 312.4Z" fill="#fff" stroke="#3a3a3a" stroke-width="0.75" stroke-linejoin="round"/>
<path d="M44.5 325.4 L62.3 314.9 Q65 313.4 67.2 315.4 Q68.6 317.4 66.6 318.9 Q64.4 319.6 64.5 321.5 L53.6 328 L53.4 330.2 Z" fill="none" stroke="#3a3a3a" stroke-width="0.7" stroke-linejoin="round"/>
<ellipse cx="240.3" cy="240.0" rx="20.1" ry="11.5" fill="#fff" stroke="#3a3a3a" stroke-width="0.8"/>
<ellipse cx="209.7" cy="258.0" rx="20.1" ry="11.5" fill="#fff" stroke="#3a3a3a" stroke-width="0.8"/>
<ellipse cx="179.0" cy="276.0" rx="20.1" ry="11.5" fill="#fff" stroke="#3a3a3a" stroke-width="0.8"/>
<ellipse cx="148.4" cy="294.0" rx="20.1" ry="11.5" fill="#fff" stroke="#3a3a3a" stroke-width="0.8"/>
<ellipse cx="117.7" cy="312.0" rx="20.1" ry="11.5" fill="#fff" stroke="#3a3a3a" stroke-width="0.8"/>
<ellipse cx="87.1" cy="330.0" rx="20.1" ry="11.5" fill="#fff" stroke="#3a3a3a" stroke-width="0.8"/>
<ellipse cx="225.0" cy="230.4" rx="2.1" ry="1.4" fill="#fff" stroke="#3a3a3a" stroke-width="0.65"/>
<ellipse cx="263.5" cy="244.7" rx="2.1" ry="1.4" fill="#fff" stroke="#3a3a3a" stroke-width="0.65"/>
<ellipse cx="256.0" cy="248.6" rx="2.1" ry="1.4" fill="#fff" stroke="#3a3a3a" stroke-width="0.65"/>
<ellipse cx="242.1" cy="254.3" rx="2.1" ry="1.4" fill="#fff" stroke="#3a3a3a" stroke-width="0.65"/>
<ellipse cx="230.7" cy="252.0" rx="2.1" ry="1.4" fill="#fff" stroke="#3a3a3a" stroke-width="0.65"/>
<ellipse cx="220.4" cy="245.9" rx="2.1" ry="1.4" fill="#fff" stroke="#3a3a3a" stroke-width="0.65"/>
<ellipse cx="215.0" cy="238.2" rx="2.1" ry="1.4" fill="#fff" stroke="#3a3a3a" stroke-width="0.65"/>
<ellipse cx="207.1" cy="242.8" rx="2.1" ry="1.4" fill="#fff" stroke="#3a3a3a" stroke-width="0.65"/>
<path d="M212.2 232.3 l3 -2 l2.6 1.5 l-3 2Z" fill="#fff" stroke="#3a3a3a" stroke-width="0.6" stroke-linejoin="round"/>
<ellipse cx="233.4" cy="256.9" rx="1.2" ry="0.9" fill="#fff" stroke="#3a3a3a" stroke-width="0.6"/>
<ellipse cx="194.3" cy="248.4" rx="2.1" ry="1.4" fill="#fff" stroke="#3a3a3a" stroke-width="0.65"/>
<ellipse cx="232.8" cy="262.7" rx="2.1" ry="1.4" fill="#fff" stroke="#3a3a3a" stroke-width="0.65"/>
<ellipse cx="225.3" cy="266.6" rx="2.1" ry="1.4" fill="#fff" stroke="#3a3a3a" stroke-width="0.65"/>
<ellipse cx="211.5" cy="272.3" rx="2.1" ry="1.4" fill="#fff" stroke="#3a3a3a" stroke-width="0.65"/>
<ellipse cx="200.1" cy="270.0" rx="2.1" ry="1.4" fill="#fff" stroke="#3a3a3a" stroke-width="0.65"/>
<ellipse cx="189.8" cy="263.9" rx="2.1" ry="1.4" fill="#fff" stroke="#3a3a3a" stroke-width="0.65"/>
<ellipse cx="184.3" cy="256.2" rx="2.1" ry="1.4" fill="#fff" stroke="#3a3a3a" stroke-width="0.65"/>
<ellipse cx="176.4" cy="260.8" rx="2.1" ry="1.4" fill="#fff" stroke="#3a3a3a" stroke-width="0.65"/>
<path d="M181.5 250.3 l3 -2 l2.6 1.5 l-3 2Z" fill="#fff" stroke="#3a3a3a" stroke-width="0.6" stroke-linejoin="round"/>
<ellipse cx="202.8" cy="274.9" rx="1.2" ry="0.9" fill="#fff" stroke="#3a3a3a" stroke-width="0.6"/>
<ellipse cx="163.7" cy="266.4" rx="2.1" ry="1.4" fill="#fff" stroke="#3a3a3a" stroke-width="0.65"/>
<ellipse cx="202.2" cy="280.7" rx="2.1" ry="1.4" fill="#fff" stroke="#3a3a3a" stroke-width="0.65"/>
<ellipse cx="194.7" cy="284.6" rx="2.1" ry="1.4" fill="#fff" stroke="#3a3a3a" stroke-width="0.65"/>
<ellipse cx="180.8" cy="290.3" rx="2.1" ry="1.4" fill="#fff" stroke="#3a3a3a" stroke-width="0.65"/>
<ellipse cx="169.4" cy="288.0" rx="2.1" ry="1.4" fill="#fff" stroke="#3a3a3a" stroke-width="0.65"/>
<ellipse cx="159.1" cy="281.9" rx="2.1" ry="1.4" fill="#fff" stroke="#3a3a3a" stroke-width="0.65"/>
<ellipse cx="153.7" cy="274.2" rx="2.1" ry="1.4" fill="#fff" stroke="#3a3a3a" stroke-width="0.65"/>
<ellipse cx="145.8" cy="278.8" rx="2.1" ry="1.4" fill="#fff" stroke="#3a3a3a" stroke-width="0.65"/>
<path d="M150.9 268.3 l3 -2 l2.6 1.5 l-3 2Z" fill="#fff" stroke="#3a3a3a" stroke-width="0.6" stroke-linejoin="round"/>
<ellipse cx="172.1" cy="292.9" rx="1.2" ry="0.9" fill="#fff" stroke="#3a3a3a" stroke-width="0.6"/>
<ellipse cx="133.1" cy="284.4" rx="2.1" ry="1.4" fill="#fff" stroke="#3a3a3a" stroke-width="0.65"/>
<ellipse cx="171.6" cy="298.7" rx="2.1" ry="1.4" fill="#fff" stroke="#3a3a3a" stroke-width="0.65"/>
<ellipse cx="164.1" cy="302.6" rx="2.1" ry="1.4" fill="#fff" stroke="#3a3a3a" stroke-width="0.65"/>
<ellipse cx="150.2" cy="308.3" rx="2.1" ry="1.4" fill="#fff" stroke="#3a3a3a" stroke-width="0.65"/>
<ellipse cx="138.8" cy="306.0" rx="2.1" ry="1.4" fill="#fff" stroke="#3a3a3a" stroke-width="0.65"/>
<ellipse cx="128.5" cy="299.9" rx="2.1" ry="1.4" fill="#fff" stroke="#3a3a3a" stroke-width="0.65"/>
<ellipse cx="123.1" cy="292.2" rx="2.1" ry="1.4" fill="#fff" stroke="#3a3a3a" stroke-width="0.65"/>
<ellipse cx="115.2" cy="296.8" rx="2.1" ry="1.4" fill="#fff" stroke="#3a3a3a" stroke-width="0.65"/>
<path d="M120.3 286.3 l3 -2 l2.6 1.5 l-3 2Z" fill="#fff" stroke="#3a3a3a" stroke-width="0.6" stroke-linejoin="round"/>
<ellipse cx="141.5" cy="310.9" rx="1.2" ry="0.9" fill="#fff" stroke="#3a3a3a" stroke-width="0.6"/>
<ellipse cx="102.4" cy="302.4" rx="2.1" ry="1.4" fill="#fff" stroke="#3a3a3a" stroke-width="0.65"/>
<ellipse cx="140.9" cy="316.7" rx="2.1" ry="1.4" fill="#fff" stroke="#3a3a3a" stroke-width="0.65"/>
<ellipse cx="133.4" cy="320.6" rx="2.1" ry="1.4" fill="#fff" stroke="#3a3a3a" stroke-width="0.65"/>
<ellipse cx="119.5" cy="326.3" rx="2.1" ry="1.4" fill="#fff" stroke="#3a3a3a" stroke-width="0.65"/>
<ellipse cx="108.1" cy="324.0" rx="2.1" ry="1.4" fill="#fff" stroke="#3a3a3a" stroke-width="0.65"/>
<ellipse cx="97.8" cy="317.9" rx="2.1" ry="1.4" fill="#fff" stroke="#3a3a3a" stroke-width="0.65"/>
<ellipse cx="92.4" cy="310.2" rx="2.1" ry="1.4" fill="#fff" stroke="#3a3a3a" stroke-width="0.65"/>
<ellipse cx="84.5" cy="314.8" rx="2.1" ry="1.4" fill="#fff" stroke="#3a3a3a" stroke-width="0.65"/>
<path d="M89.6 304.3 l3 -2 l2.6 1.5 l-3 2Z" fill="#fff" stroke="#3a3a3a" stroke-width="0.6" stroke-linejoin="round"/>
<ellipse cx="110.8" cy="328.9" rx="1.2" ry="0.9" fill="#fff" stroke="#3a3a3a" stroke-width="0.6"/>
<ellipse cx="71.8" cy="320.4" rx="2.1" ry="1.4" fill="#fff" stroke="#3a3a3a" stroke-width="0.65"/>
<ellipse cx="110.3" cy="334.7" rx="2.1" ry="1.4" fill="#fff" stroke="#3a3a3a" stroke-width="0.65"/>
<ellipse cx="102.8" cy="338.6" rx="2.1" ry="1.4" fill="#fff" stroke="#3a3a3a" stroke-width="0.65"/>
<ellipse cx="88.9" cy="344.3" rx="2.1" ry="1.4" fill="#fff" stroke="#3a3a3a" stroke-width="0.65"/>
<ellipse cx="77.5" cy="342.0" rx="2.1" ry="1.4" fill="#fff" stroke="#3a3a3a" stroke-width="0.65"/>
<ellipse cx="67.2" cy="335.9" rx="2.1" ry="1.4" fill="#fff" stroke="#3a3a3a" stroke-width="0.65"/>
<ellipse cx="61.8" cy="328.2" rx="2.1" ry="1.4" fill="#fff" stroke="#3a3a3a" stroke-width="0.65"/>
<ellipse cx="228.4" cy="228.9" rx="2.1" ry="1.4" fill="#fff" stroke="#3a3a3a" stroke-width="0.65"/>
<ellipse cx="237.9" cy="224.4" rx="2.1" ry="1.4" fill="#fff" stroke="#3a3a3a" stroke-width="0.65"/>
<ellipse cx="240.9" cy="221.3" rx="2.1" ry="1.4" fill="#fff" stroke="#3a3a3a" stroke-width="0.65"/>
<ellipse cx="251.9" cy="228.2" rx="2.1" ry="1.4" fill="#fff" stroke="#3a3a3a" stroke-width="0.65"/>
<ellipse cx="261.5" cy="234.5" rx="2.1" ry="1.4" fill="#fff" stroke="#3a3a3a" stroke-width="0.65"/>
<ellipse cx="232.8" cy="262.9" rx="2.1" ry="1.4" fill="#fff" stroke="#3a3a3a" stroke-width="0.65"/></g>
<g transform="translate(0 0)"><path d="M70.6 312.4 L236.7 215.2 L278 239.4 L278 241.6 L100 342.6 L90.5 347.6 Q82 349.4 73.3 346.2 L40.3 327.6 L40.2 324.6 L62.6 311.4 Q64.5 310.4 66.6 311.8 Q68.6 313.2 70.6 312.4Z" fill="#fff" stroke="#3a3a3a" stroke-width="0.8" stroke-linejoin="round"/>
<path d="M276.6 240.2 L99.6 340.6 L90 345.6 Q82 347.3 74 344.4 L41.6 325.8" fill="none" stroke="#3a3a3a" stroke-width="0.55"/>
<path d="M276.6 241 L99.6 341.6 L90 346.6 Q82 348.3 74 345.3" fill="none" stroke="#3a3a3a" stroke-width="0.9" stroke-dasharray="0.8 1.1" opacity="0.75"/>
<path d="M44.5 325.4 L62.3 314.9 Q65 313.4 67.2 315.4 Q68.6 317.4 66.6 318.9 Q64.4 319.6 64.5 321.5 L53.6 328 L53.4 330.2 Z" fill="none" stroke="#3a3a3a" stroke-width="0.7" stroke-linejoin="round"/>
<path d="M45.6 326 L62.6 316" fill="none" stroke="#3a3a3a" stroke-width="0.9" stroke-dasharray="0.8 1" opacity="0.7"/>
<ellipse cx="240.3" cy="240.0" rx="20.1" ry="11.5" fill="#fff" stroke="#3a3a3a" stroke-width="1"/>
<path d="M223.3 232.4 A21.3 12.4 0 0 1 255.3 231.3" fill="none" stroke="#3a3a3a" stroke-width="0.5" opacity="0.7"/>
<ellipse cx="209.7" cy="258.0" rx="20.1" ry="11.5" fill="#fff" stroke="#3a3a3a" stroke-width="1"/>
<path d="M192.7 250.4 A21.3 12.4 0 0 1 224.7 249.3" fill="none" stroke="#3a3a3a" stroke-width="0.5" opacity="0.7"/>
<ellipse cx="179.0" cy="276.0" rx="20.1" ry="11.5" fill="#fff" stroke="#3a3a3a" stroke-width="1"/>
<path d="M162.0 268.4 A21.3 12.4 0 0 1 194.0 267.3" fill="none" stroke="#3a3a3a" stroke-width="0.5" opacity="0.7"/>
<ellipse cx="148.4" cy="294.0" rx="20.1" ry="11.5" fill="#fff" stroke="#3a3a3a" stroke-width="1"/>
<path d="M131.4 286.4 A21.3 12.4 0 0 1 163.4 285.3" fill="none" stroke="#3a3a3a" stroke-width="0.5" opacity="0.7"/>
<ellipse cx="117.7" cy="312.0" rx="20.1" ry="11.5" fill="#fff" stroke="#3a3a3a" stroke-width="1"/>
<path d="M100.7 304.4 A21.3 12.4 0 0 1 132.7 303.3" fill="none" stroke="#3a3a3a" stroke-width="0.5" opacity="0.7"/>
<ellipse cx="87.1" cy="330.0" rx="20.1" ry="11.5" fill="#fff" stroke="#3a3a3a" stroke-width="1"/>
<path d="M70.1 322.4 A21.3 12.4 0 0 1 102.1 321.3" fill="none" stroke="#3a3a3a" stroke-width="0.5" opacity="0.7"/>
<ellipse cx="225.0" cy="230.4" rx="1.9" ry="1.2" fill="#8c8c8c" stroke="#444" stroke-width="0.55"/>
<ellipse cx="263.5" cy="244.7" rx="1.9" ry="1.2" fill="#8c8c8c" stroke="#444" stroke-width="0.55"/>
<ellipse cx="256.0" cy="248.6" rx="1.9" ry="1.2" fill="#8c8c8c" stroke="#444" stroke-width="0.55"/>
<ellipse cx="242.1" cy="254.3" rx="1.9" ry="1.2" fill="#8c8c8c" stroke="#444" stroke-width="0.55"/>
<ellipse cx="230.7" cy="252.0" rx="1.9" ry="1.2" fill="#8c8c8c" stroke="#444" stroke-width="0.55"/>
<ellipse cx="220.4" cy="245.9" rx="1.9" ry="1.2" fill="#8c8c8c" stroke="#444" stroke-width="0.55"/>
<ellipse cx="215.0" cy="238.2" rx="1.9" ry="1.2" fill="#8c8c8c" stroke="#444" stroke-width="0.55"/>
<ellipse cx="207.1" cy="242.8" rx="1.9" ry="1.2" fill="#8c8c8c" stroke="#444" stroke-width="0.55"/>
<ellipse cx="215.0" cy="232.0" rx="3.1" ry="1.7" transform="rotate(-24 215.0 232.0)" fill="#fff" stroke="#3a3a3a" stroke-width="0.7"/>
<rect x="232.2" y="256.2" width="2.4" height="1.4" fill="#3a3a3a" opacity="0.85"/>
<ellipse cx="194.3" cy="248.4" rx="1.9" ry="1.2" fill="#8c8c8c" stroke="#444" stroke-width="0.55"/>
<ellipse cx="232.8" cy="262.7" rx="1.9" ry="1.2" fill="#8c8c8c" stroke="#444" stroke-width="0.55"/>
<ellipse cx="225.3" cy="266.6" rx="1.9" ry="1.2" fill="#8c8c8c" stroke="#444" stroke-width="0.55"/>
<ellipse cx="211.5" cy="272.3" rx="1.9" ry="1.2" fill="#8c8c8c" stroke="#444" stroke-width="0.55"/>
<ellipse cx="200.1" cy="270.0" rx="1.9" ry="1.2" fill="#8c8c8c" stroke="#444" stroke-width="0.55"/>
<ellipse cx="189.8" cy="263.9" rx="1.9" ry="1.2" fill="#8c8c8c" stroke="#444" stroke-width="0.55"/>
<ellipse cx="184.3" cy="256.2" rx="1.9" ry="1.2" fill="#8c8c8c" stroke="#444" stroke-width="0.55"/>
<ellipse cx="176.4" cy="260.8" rx="1.9" ry="1.2" fill="#8c8c8c" stroke="#444" stroke-width="0.55"/>
<ellipse cx="184.3" cy="250.0" rx="3.1" ry="1.7" transform="rotate(-24 184.3 250.0)" fill="#fff" stroke="#3a3a3a" stroke-width="0.7"/>
<rect x="201.6" y="274.2" width="2.4" height="1.4" fill="#3a3a3a" opacity="0.85"/>
<ellipse cx="163.7" cy="266.4" rx="1.9" ry="1.2" fill="#8c8c8c" stroke="#444" stroke-width="0.55"/>
<ellipse cx="202.2" cy="280.7" rx="1.9" ry="1.2" fill="#8c8c8c" stroke="#444" stroke-width="0.55"/>
<ellipse cx="194.7" cy="284.6" rx="1.9" ry="1.2" fill="#8c8c8c" stroke="#444" stroke-width="0.55"/>
<ellipse cx="180.8" cy="290.3" rx="1.9" ry="1.2" fill="#8c8c8c" stroke="#444" stroke-width="0.55"/>
<ellipse cx="169.4" cy="288.0" rx="1.9" ry="1.2" fill="#8c8c8c" stroke="#444" stroke-width="0.55"/>
<ellipse cx="159.1" cy="281.9" rx="1.9" ry="1.2" fill="#8c8c8c" stroke="#444" stroke-width="0.55"/>
<ellipse cx="153.7" cy="274.2" rx="1.9" ry="1.2" fill="#8c8c8c" stroke="#444" stroke-width="0.55"/>
<ellipse cx="145.8" cy="278.8" rx="1.9" ry="1.2" fill="#8c8c8c" stroke="#444" stroke-width="0.55"/>
<ellipse cx="153.7" cy="268.0" rx="3.1" ry="1.7" transform="rotate(-24 153.7 268.0)" fill="#fff" stroke="#3a3a3a" stroke-width="0.7"/>
<rect x="170.9" y="292.2" width="2.4" height="1.4" fill="#3a3a3a" opacity="0.85"/>
<ellipse cx="133.1" cy="284.4" rx="1.9" ry="1.2" fill="#8c8c8c" stroke="#444" stroke-width="0.55"/>
<ellipse cx="171.6" cy="298.7" rx="1.9" ry="1.2" fill="#8c8c8c" stroke="#444" stroke-width="0.55"/>
<ellipse cx="164.1" cy="302.6" rx="1.9" ry="1.2" fill="#8c8c8c" stroke="#444" stroke-width="0.55"/>
<ellipse cx="150.2" cy="308.3" rx="1.9" ry="1.2" fill="#8c8c8c" stroke="#444" stroke-width="0.55"/>
<ellipse cx="138.8" cy="306.0" rx="1.9" ry="1.2" fill="#8c8c8c" stroke="#444" stroke-width="0.55"/>
<ellipse cx="128.5" cy="299.9" rx="1.9" ry="1.2" fill="#8c8c8c" stroke="#444" stroke-width="0.55"/>
<ellipse cx="123.1" cy="292.2" rx="1.9" ry="1.2" fill="#8c8c8c" stroke="#444" stroke-width="0.55"/>
<ellipse cx="115.2" cy="296.8" rx="1.9" ry="1.2" fill="#8c8c8c" stroke="#444" stroke-width="0.55"/>
<ellipse cx="123.1" cy="286.0" rx="3.1" ry="1.7" transform="rotate(-24 123.1 286.0)" fill="#fff" stroke="#3a3a3a" stroke-width="0.7"/>
<rect x="140.3" y="310.2" width="2.4" height="1.4" fill="#3a3a3a" opacity="0.85"/>
<ellipse cx="102.4" cy="302.4" rx="1.9" ry="1.2" fill="#8c8c8c" stroke="#444" stroke-width="0.55"/>
<ellipse cx="140.9" cy="316.7" rx="1.9" ry="1.2" fill="#8c8c8c" stroke="#444" stroke-width="0.55"/>
<ellipse cx="133.4" cy="320.6" rx="1.9" ry="1.2" fill="#8c8c8c" stroke="#444" stroke-width="0.55"/>
<ellipse cx="119.5" cy="326.3" rx="1.9" ry="1.2" fill="#8c8c8c" stroke="#444" stroke-width="0.55"/>
<ellipse cx="108.1" cy="324.0" rx="1.9" ry="1.2" fill="#8c8c8c" stroke="#444" stroke-width="0.55"/>
<ellipse cx="97.8" cy="317.9" rx="1.9" ry="1.2" fill="#8c8c8c" stroke="#444" stroke-width="0.55"/>
<ellipse cx="92.4" cy="310.2" rx="1.9" ry="1.2" fill="#8c8c8c" stroke="#444" stroke-width="0.55"/>
<ellipse cx="84.5" cy="314.8" rx="1.9" ry="1.2" fill="#8c8c8c" stroke="#444" stroke-width="0.55"/>
<ellipse cx="92.4" cy="304.0" rx="3.1" ry="1.7" transform="rotate(-24 92.4 304.0)" fill="#fff" stroke="#3a3a3a" stroke-width="0.7"/>
<rect x="109.6" y="328.2" width="2.4" height="1.4" fill="#3a3a3a" opacity="0.85"/>
<ellipse cx="71.8" cy="320.4" rx="1.9" ry="1.2" fill="#8c8c8c" stroke="#444" stroke-width="0.55"/>
<ellipse cx="110.3" cy="334.7" rx="1.9" ry="1.2" fill="#8c8c8c" stroke="#444" stroke-width="0.55"/>
<ellipse cx="102.8" cy="338.6" rx="1.9" ry="1.2" fill="#8c8c8c" stroke="#444" stroke-width="0.55"/>
<ellipse cx="88.9" cy="344.3" rx="1.9" ry="1.2" fill="#8c8c8c" stroke="#444" stroke-width="0.55"/>
<ellipse cx="77.5" cy="342.0" rx="1.9" ry="1.2" fill="#8c8c8c" stroke="#444" stroke-width="0.55"/>
<ellipse cx="67.2" cy="335.9" rx="1.9" ry="1.2" fill="#8c8c8c" stroke="#444" stroke-width="0.55"/>
<ellipse cx="61.8" cy="328.2" rx="1.9" ry="1.2" fill="#8c8c8c" stroke="#444" stroke-width="0.55"/>
<ellipse cx="228.4" cy="228.9" rx="1.9" ry="1.2" fill="#8c8c8c" stroke="#444" stroke-width="0.55"/>
<ellipse cx="237.9" cy="224.4" rx="1.9" ry="1.2" fill="#8c8c8c" stroke="#444" stroke-width="0.55"/>
<ellipse cx="240.9" cy="221.3" rx="1.9" ry="1.2" fill="#8c8c8c" stroke="#444" stroke-width="0.55"/>
<ellipse cx="251.9" cy="228.2" rx="1.9" ry="1.2" fill="#8c8c8c" stroke="#444" stroke-width="0.55"/>
<ellipse cx="261.5" cy="234.5" rx="1.9" ry="1.2" fill="#8c8c8c" stroke="#444" stroke-width="0.55"/>
<ellipse cx="232.8" cy="262.9" rx="1.9" ry="1.2" fill="#8c8c8c" stroke="#444" stroke-width="0.55"/></g>
<path d="M240.9 210.0 L240.9 221.5" stroke="#3a3a3a" stroke-width="0.5" fill="none" />
<path d="M240.9 228.6 L240.9 251.4" stroke="#3a3a3a" stroke-width="0.5" fill="none" />
<path d="M240.9 262.0 L240.9 266.5" stroke="#3a3a3a" stroke-width="0.5" fill="none" />
<path d="M228.4 215.0 L228.4 229.0" stroke="#3a3a3a" stroke-width="0.5" fill="none" />
<rect x="239.5" y="201.2" width="2.9" height="8.8" rx="1.2" fill="#fff" stroke="#3a3a3a" stroke-width="0.7"/>
<rect x="227.3" y="208.2" width="2.2" height="7" rx="1" fill="#fff" stroke="#3a3a3a" stroke-width="0.7"/>
<path d="M53.3 312.6 L53.3 330.0" stroke="#3a3a3a" stroke-width="0.5" fill="none" />
<rect x="52.3" y="307" width="2.1" height="5.6" rx="0.9" fill="#fff" stroke="#3a3a3a" stroke-width="0.7"/>
<path d="M243.4 206.4 L251.3 204.9" stroke="#3a3a3a" stroke-width="0.5" fill="none" />
<rect x="251.3" y="199.4" width="5.6" height="7.0" fill="#ffff00"/><text x="254.1" y="205.2" text-anchor="middle" font-size="6.8" font-weight="normal" stroke="#222" stroke-width="0.12" fill="#1a1a00" font-family="Liberation Sans, sans-serif">4</text>
<path d="M218.2 214.2 L226.8 213.3" stroke="#3a3a3a" stroke-width="0.5" fill="none" />
<rect x="213.0" y="211.2" width="5.2" height="6.6" fill="#ffff00"/><text x="215.6" y="216.6" text-anchor="middle" font-size="6.8" font-weight="normal" stroke="#222" stroke-width="0.12" fill="#1a1a00" font-family="Liberation Sans, sans-serif">5</text>
<path d="M54.6 307.5 L59.3 304.4" stroke="#3a3a3a" stroke-width="0.5" fill="none" />
<rect x="58.8" y="297.4" width="5.2" height="6.6" fill="#ffff00"/><text x="61.4" y="302.8" text-anchor="middle" font-size="6.8" font-weight="normal" stroke="#222" stroke-width="0.12" fill="#1a1a00" font-family="Liberation Sans, sans-serif">6</text>
<path d="M264.0 247.6 L274.8 255.3" stroke="#3a3a3a" stroke-width="0.5" fill="none" />
<rect x="274.8" y="255.0" width="5.2" height="6.8" fill="#ffff00"/><text x="277.4" y="260.6" text-anchor="middle" font-size="6.8" font-weight="normal" stroke="#222" stroke-width="0.12" fill="#1a1a00" font-family="Liberation Sans, sans-serif">1</text>
<path d="M257.0 313.4 L266.8 324.0" stroke="#3a3a3a" stroke-width="0.5" fill="none" />
<rect x="265.8" y="324.0" width="5.4" height="6.8" fill="#ffff00"/><text x="268.5" y="329.6" text-anchor="middle" font-size="6.8" font-weight="normal" stroke="#222" stroke-width="0.12" fill="#1a1a00" font-family="Liberation Sans, sans-serif">2</text>
<ellipse cx="240.7" cy="268.3" rx="2.3" ry="1.5" fill="#fff" stroke="#222" stroke-width="1.1"/>
<path d="M243.0 268.6 L251.9 271.4" stroke="#3a3a3a" stroke-width="0.5" fill="none" />
<rect x="251.9" y="269.2" width="5.2" height="6.4" fill="#ffff00"/><text x="254.5" y="274.4" text-anchor="middle" font-size="6.8" font-weight="normal" stroke="#222" stroke-width="0.12" fill="#1a1a00" font-family="Liberation Sans, sans-serif">7</text>
<path d="M41.1 349.1 L51.4 358.2" stroke="#3a3a3a" stroke-width="0.5" fill="none" />
<path d="M44.6 362.6 L61.4 353.2 L64.6 356.7 L63.5 360 L51.6 366.4 Z" fill="#fff" stroke="#4a4a4a" stroke-width="1.25" stroke-linejoin="round"/>
<path d="M51.4 358.8 L56 363 M57.6 355.6 L62.5 359.9" fill="none" stroke="#4a4a4a" stroke-width="1.1"/>
<ellipse cx="65.3" cy="353.8" rx="3.1" ry="2" fill="#fff" stroke="#333" stroke-width="1"/>
<rect x="35.0" y="342.3" width="5.4" height="6.9" fill="#ffff00"/><text x="37.7" y="348.0" text-anchor="middle" font-size="6.8" font-weight="normal" stroke="#222" stroke-width="0.12" fill="#1a1a00" font-family="Liberation Sans, sans-serif">3</text>
<path d="M280.6 419.2 L289.8 420.6" stroke="#3a3a3a" stroke-width="0.5" fill="none" />
<rect x="290.2" y="417.1" width="10.2" height="7.1" rx="2.6" fill="#b0b0b0" stroke="#2e2e2e" stroke-width="0.9"/>
<path d="M292 418.6 H297 M292 420.6 H297 M292 422.6 H297" stroke="#8a8a8a" stroke-width="0.5"/>
<ellipse cx="298.4" cy="420.7" rx="2" ry="3" fill="#eee" stroke="#444" stroke-width="0.6"/>
<ellipse cx="298.5" cy="420.7" rx="0.9" ry="1.6" fill="#999"/>
<path d="M294.2 416.7 L297.3 411.2" stroke="#3a3a3a" stroke-width="0.5" fill="none" />
<rect x="295.9" y="403.9" width="6.1" height="7.1" fill="#ffff00"/><text x="298.9" y="409.8" text-anchor="middle" font-size="6.8" font-weight="normal" stroke="#222" stroke-width="0.12" fill="#1a1a00" font-family="Liberation Sans, sans-serif">8</text>
<path d="M197.7 449.1 L214.9 458.1 M219.6 460.8 L221 461.6 M224.4 464.4 L252 478.6 M255 480.4 L256.6 481.2 M259.6 482.8 L291.4 502.6" stroke="#444" stroke-width="0.6" fill="none"/>
<ellipse cx="300.7" cy="507.8" rx="3.7" ry="5.1" transform="rotate(25 300.7 507.8)" fill="#fff" stroke="#333" stroke-width="0.8"/>
<path d="M291.2 503.1 L294 501.1 L297.9 503.1 L296.8 508.7 L292.3 506.7Z" fill="#a8a8a8" stroke="#333" stroke-width="0.8" stroke-linejoin="round"/>
<path d="M297.9 503.1 Q295.6 506 296.8 508.7" fill="none" stroke="#333" stroke-width="0.7"/>
<path d="M294.5 509.8 L292.0 514.8" stroke="#3a3a3a" stroke-width="0.5" fill="none" />
<rect x="287.8" y="515.0" width="6.2" height="7.0" fill="#ffff00"/><text x="290.9" y="520.8" text-anchor="middle" font-size="6.8" font-weight="normal" stroke="#222" stroke-width="0.12" fill="#1a1a00" font-family="Liberation Sans, sans-serif">9</text>
<path d="M96.0 527.3 L103.0 527.3" stroke="#3a3a3a" stroke-width="0.5" fill="none" />
<ellipse cx="104.6" cy="527.3" rx="1.3" ry="1.9" fill="#fff" stroke="#222" stroke-width="0.8"/>
<path d="M106.2 527.3 L110.0 527.3" stroke="#3a3a3a" stroke-width="0.5" fill="none" />
<rect x="110" y="525.6" width="3.4" height="3.4" fill="#888" stroke="#333" stroke-width="0.6"/>
<ellipse cx="116" cy="527.4" rx="2.3" ry="2.9" fill="#fff" stroke="#333" stroke-width="0.8"/>
<path d="M104.6 529.4 L104.6 533.5" stroke="#3a3a3a" stroke-width="0.5" fill="none" />
<rect x="100.8" y="533.6" width="7.6" height="6.9" fill="#ffff00"/><text x="104.6" y="539.3" text-anchor="middle" font-size="6.8" font-weight="normal" stroke="#222" stroke-width="0.12" fill="#1a1a00" font-family="Liberation Sans, sans-serif">11</text>
<path d="M116.4 530.4 L116.8 533.5" stroke="#3a3a3a" stroke-width="0.5" fill="none" />
<rect x="112.4" y="533.6" width="8.8" height="6.9" fill="#ffff00"/><text x="116.8" y="539.3" text-anchor="middle" font-size="6.8" font-weight="normal" stroke="#222" stroke-width="0.12" fill="#1a1a00" font-family="Liberation Sans, sans-serif">10</text>
<path d="M85.8 582.4 L99.8 574.5" stroke="#3a3a3a" stroke-width="0.5" fill="none" />
<rect x="-3.7" y="-1.5" width="7.4" height="3" rx="1.4" transform="translate(81.7 584.3) rotate(-28)" fill="#fff" stroke="#222" stroke-width="0.8"/>
<path d="M75.4 575.0 L79.6 582.5" stroke="#3a3a3a" stroke-width="0.5" fill="none" />
<rect x="67.4" y="568.0" width="8.2" height="6.9" fill="#ffff00"/><text x="71.5" y="573.7" text-anchor="middle" font-size="6.8" font-weight="normal" stroke="#222" stroke-width="0.12" fill="#1a1a00" font-family="Liberation Sans, sans-serif">12</text>
<path d="M33.4 547.8 L68.4 528.8" stroke="#3a3a3a" stroke-width="0.5" fill="none" />
<ellipse cx="31.6" cy="549.3" rx="1.7" ry="1.9" fill="#fff" stroke="#333" stroke-width="0.7"/>
<path d="M29.6 544.5 L30.8 547.6" stroke="#3a3a3a" stroke-width="0.5" fill="none" />
<rect x="22.4" y="537.8" width="7.8" height="6.7" fill="#ffff00"/><text x="26.3" y="543.3" text-anchor="middle" font-size="6.8" font-weight="normal" stroke="#222" stroke-width="0.12" fill="#1a1a00" font-family="Liberation Sans, sans-serif">13</text>
<path d="M32.4 560.2 L46.6 553.4" stroke="#3a3a3a" stroke-width="0.5" fill="none" />
<path d="M48 552.6 L86.6 530.6" stroke="#444" stroke-width="0.55" fill="none" stroke-dasharray="12 2.5"/>
<ellipse cx="29.5" cy="562.8" rx="2.6" ry="3.3" transform="rotate(-28 29.5 562.8)" fill="#fff" stroke="#222" stroke-width="1.2"/>
<ellipse cx="22.5" cy="567" rx="2.9" ry="3.6" transform="rotate(-28 22.5 567)" fill="#fff" stroke="#222" stroke-width="1.2"/>
<path d="M26.4 556.4 L28.2 559.6" stroke="#3a3a3a" stroke-width="0.5" fill="none" />
<rect x="19.3" y="548.8" width="8.0" height="7.4" fill="#f08080"/><text x="23.3" y="555.0" text-anchor="middle" font-size="6.8" fill="#d86a6a" font-family="Liberation Sans, sans-serif">15</text>
<path d="M17.8 559.8 L20.6 563.6" stroke="#3a3a3a" stroke-width="0.5" fill="none" />
<rect x="10.0" y="553.0" width="8.4" height="7.0" fill="#ffff00"/><text x="14.2" y="558.8" text-anchor="middle" font-size="6.8" font-weight="normal" stroke="#222" stroke-width="0.12" fill="#1a1a00" font-family="Liberation Sans, sans-serif">14</text>
</svg></div>
<div id="sep"></div>
<div id="tools"><div class="in"></div>
<svg style="left:13px;top:11px" width="18" height="16"><use href="#tplus"/></svg>
<svg style="left:11px;top:34px" width="18" height="16"><use href="#tminus"/></svg>
<svg style="left:13px;top:63px" width="16" height="16"><use href="#tgrid"/></svg>
<svg style="left:13px;top:86px" width="16" height="16"><use href="#tsq"/></svg>
<svg style="left:12px;top:139px" width="18" height="16"><use href="#tlist"/></svg>
</div>
<div id="grid"><table>
<colgroup><col style="width:80px"><col style="width:84px"><col style="width:35px"><col style="width:84px"><col style="width:35px"><col style="width:84px"><col style="width:175px"><col style="width:123px"></colgroup>
<tr><th style="padding:0;position:relative"><svg style="position:absolute;left:27px;top:1px;overflow:visible" width="17" height="17"><use href="#search"/></svg></th><th><span style="transform:scaleX(.89)">Symbol(s)</span></th><th><span>Item</span></th><th><span style="transform:scaleX(.91)">Parts No.</span></th><th><span>Qty.</span></th><th><span style="transform:scaleX(.925)">Latest Part No.</span></th><th><span>Description</span></th><th><span>C</span></th></tr>
<tr><td class="c1"><svg class="ic" style="left:3px"><use href="#gear"/></svg><svg class="ic" style="left:21px"><use href="#cart"/></svg><svg class="ic" style="left:39px"><use href="#info"/></svg></td><td class="c2"></td><td><span class="t">1</span></td><td><span class="t">CH10662</span></td><td><span class="t">1</span></td><td><span class="t">CH10662</span></td><td><span class="t" style="transform:scaleX(0.83)">SPACER</span></td><td></td></tr>
<tr><td class="c1"><svg class="ic" style="left:3px"><use href="#gear"/></svg><svg class="ic" style="left:21px"><use href="#cart"/></svg><svg class="ic" style="left:39px"><use href="#sicon"/></svg><svg class="ic" style="left:57px"><use href="#info"/></svg></td><td class="c2"></td><td><span class="t">2</span></td><td><span class="t"></span></td><td><span class="t">1</span></td><td><span class="t"></span></td><td><span class="t" style="transform:scaleX(0.785)">GASKET</span></td><td></td></tr>
<tr><td class="c1"><svg class="ic" style="left:3px"><use href="#gear"/></svg><svg class="ic" style="left:21px"><use href="#sicon"/></svg><svg class="ic" style="left:39px"><use href="#book"/></svg><svg class="ic" style="left:57px"><use href="#info"/></svg></td><td class="c2"></td><td><span class="t">3</span></td><td><span class="t"></span></td><td><span class="t">1</span></td><td><span class="t"></span></td><td><span class="t" style="transform:scaleX(0.79)">SEAL</span></td><td></td></tr>
<tr><td class="c1"><svg class="ic" style="left:3px"><use href="#gear"/></svg><svg class="ic" style="left:21px"><use href="#cart"/></svg><svg class="ic" style="left:39px"><use href="#info"/></svg></td><td class="c2"></td><td><span class="t">4</span></td><td><span class="t">CH10661</span></td><td><span class="t">1</span></td><td><span class="t">CH10661</span></td><td><span class="t" style="transform:scaleX(0.89)">DOWEL</span></td><td></td></tr>
<tr><td class="c1"><svg class="ic" style="left:3px"><use href="#gear"/></svg><svg class="ic" style="left:21px"><use href="#cart"/></svg><svg class="ic" style="left:39px"><use href="#info"/></svg></td><td class="c2"></td><td><span class="t">5</span></td><td><span class="t">CH10656</span></td><td><span class="t">1</span></td><td><span class="t">CH10656</span></td><td><span class="t" style="transform:scaleX(0.89)">DOWEL</span></td><td></td></tr>
<tr><td class="c1"><svg class="ic" style="left:3px"><use href="#gear"/></svg><svg class="ic" style="left:21px"><use href="#cart"/></svg><svg class="ic" style="left:39px"><use href="#info"/></svg></td><td class="c2"></td><td><span class="t">6</span></td><td><span class="t">CH10659</span></td><td><span class="t">1</span></td><td><span class="t">CH10659</span></td><td><span class="t" style="transform:scaleX(0.89)">DOWEL</span></td><td></td></tr>
<tr><td class="c1"><svg class="ic" style="left:3px"><use href="#gear"/></svg><svg class="ic" style="left:21px"><use href="#cart"/></svg><svg class="ic" style="left:39px"><use href="#info"/></svg></td><td class="c2"><svg class="sy"><use href="#note"/></svg></td><td><span class="t">7</span></td><td><span class="t">CH10660</span></td><td><span class="t">1</span></td><td><span class="t">CH10660</span></td><td><span class="t" style="transform:scaleX(0.865)">SEAL - O RING</span></td><td></td></tr>
<tr><td class="c1"><svg class="ic" style="left:3px"><use href="#gear"/></svg><svg class="ic" style="left:21px"><use href="#cart"/></svg><svg class="ic" style="left:39px"><use href="#info"/></svg></td><td class="c2"></td><td><span class="t">8</span></td><td><span class="t">CH10221</span></td><td><span class="t">5</span></td><td><span class="t">CH10221</span></td><td><span class="t" style="transform:scaleX(0.81)">PLUG</span></td><td></td></tr>
<tr><td class="c1"><svg class="ic" style="left:3px"><use href="#gear"/></svg><svg class="ic" style="left:21px"><use href="#cart"/></svg><svg class="ic" style="left:39px"><use href="#sicon"/></svg><svg class="ic" style="left:57px"><use href="#info"/></svg></td><td class="c2"><svg class="sy"><use href="#xmark"/></svg></td><td><span class="t">9</span></td><td><span class="t">CH10568</span></td><td><span class="t">2</span></td><td><span class="t">CH11963</span></td><td><span class="t" style="transform:scaleX(0.81)">PLUG</span></td><td></td></tr>
<tr><td class="c1"><svg class="ic" style="left:3px"><use href="#gear"/></svg><svg class="ic" style="left:21px"><use href="#cart"/></svg><svg class="ic" style="left:39px"><use href="#info"/></svg></td><td class="c2"></td><td><span class="t">10</span></td><td><span class="t">CH10664</span></td><td><span class="t">1</span></td><td><span class="t">CH10664</span></td><td><span class="t" style="transform:scaleX(0.81)">PLUG</span></td><td></td></tr>
<tr><td class="c1"><svg class="ic" style="left:3px"><use href="#gear"/></svg><svg class="ic" style="left:21px"><use href="#cart"/></svg><svg class="ic" style="left:39px"><use href="#info"/></svg></td><td class="c2"></td><td><span class="t">11</span></td><td><span class="t">CH10667</span></td><td><span class="t">1</span></td><td><span class="t">CH10667</span></td><td><span class="t" style="transform:scaleX(0.865)">SEAL - O RING</span></td><td></td></tr>
<tr><td class="c1"><svg class="ic" style="left:3px"><use href="#gear"/></svg><svg class="ic" style="left:21px"><use href="#cart"/></svg><svg class="ic" style="left:39px"><use href="#info"/></svg></td><td class="c2"></td><td><span class="t">12</span></td><td><span class="t">CH10658</span></td><td><span class="t">2</span></td><td><span class="t">CH10658</span></td><td><span class="t" style="transform:scaleX(0.89)">DOWEL</span></td><td></td></tr>
<tr><td class="c1"><svg class="ic" style="left:3px"><use href="#gear"/></svg><svg class="ic" style="left:21px"><use href="#cart"/></svg><svg class="ic" style="left:39px"><use href="#info"/></svg></td><td class="c2"></td><td><span class="t">13</span></td><td><span class="t">CH10663</span></td><td><span class="t">1</span></td><td><span class="t">CH10663</span></td><td><span class="t" style="transform:scaleX(0.81)">PLUG</span></td><td></td></tr>
<tr><td class="c1"><svg class="ic" style="left:3px"><use href="#gear"/></svg><svg class="ic" style="left:21px"><use href="#cart"/></svg><svg class="ic" style="left:39px"><use href="#info"/></svg></td><td class="c2"></td><td><span class="t">14</span></td><td><span class="t">CH10666</span></td><td><span class="t">2</span></td><td><span class="t">CH10666</span></td><td><span class="t" style="transform:scaleX(0.81)">PLUG</span></td><td></td></tr>
<tr class="sel"><td class="c1"><svg class="ic" style="left:3px"><use href="#gear2"/></svg><svg class="ic" style="left:21px"><use href="#cart"/></svg><svg class="ic" style="left:39px"><use href="#info"/></svg></td><td class="c2"></td><td><span class="t">15</span></td><td><span class="t">CH10657</span></td><td><span class="t">2</span></td><td><span class="t">CH10657</span></td><td><span class="t" style="transform:scaleX(0.865)">SEAL - O RING</span></td><td></td></tr>
</table></div>
<svg id="logo" viewBox="0 0 43 52"><use href="#perkins"/></svg>
</body></html>
